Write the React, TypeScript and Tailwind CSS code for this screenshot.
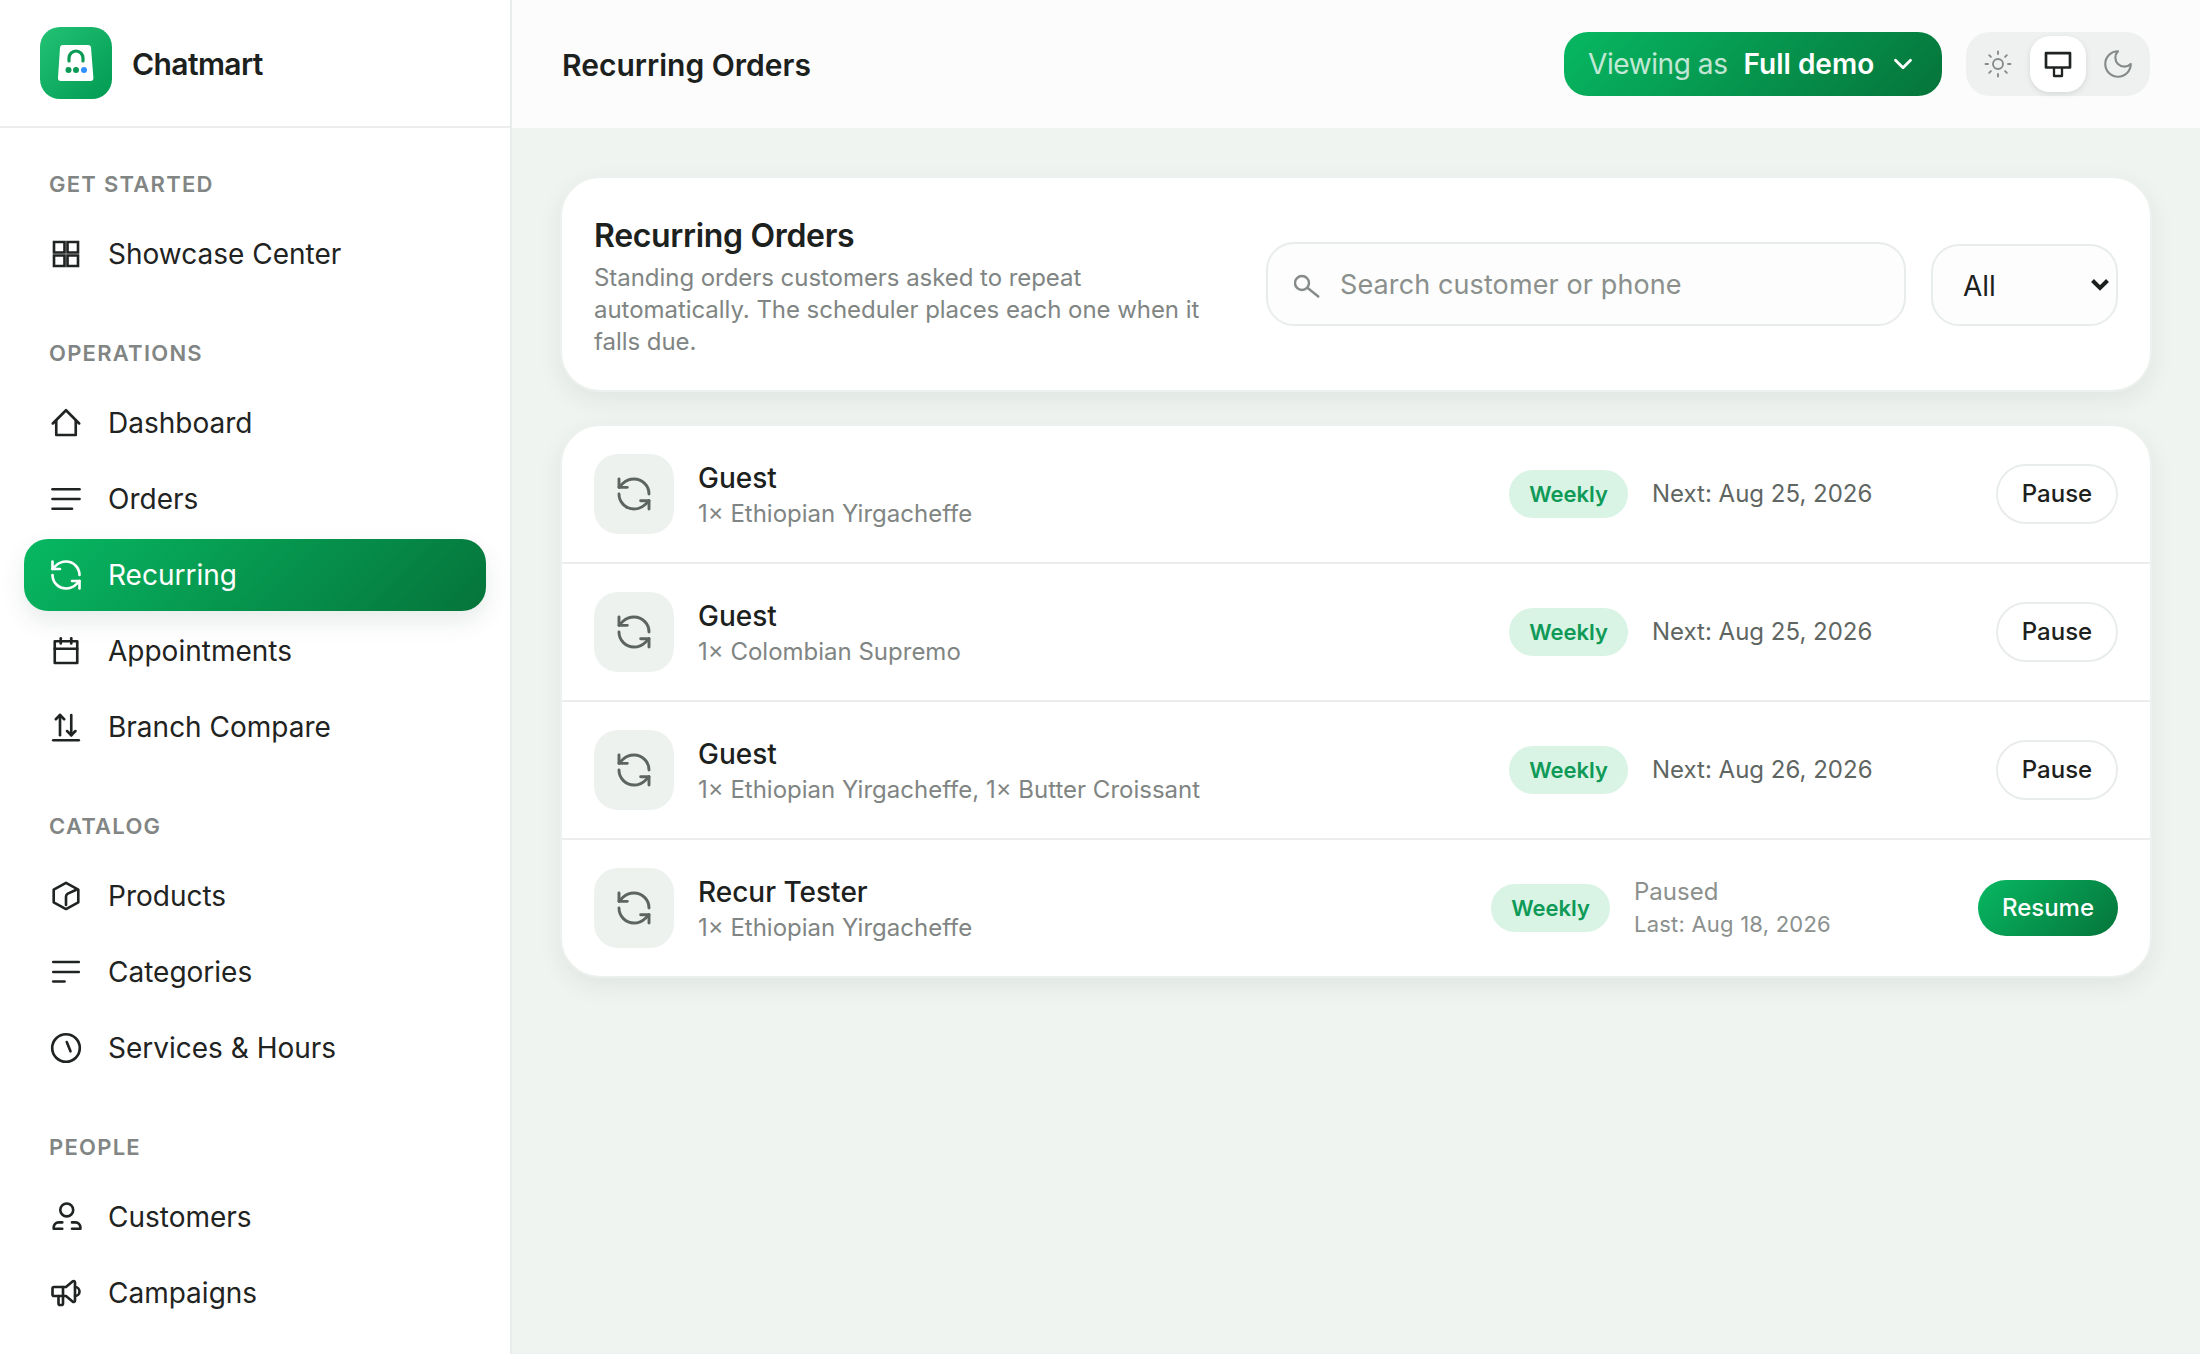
import { ChevronDown, RefreshCcw } from "lucide-react";

function Icon({ d, children }: { d?: string[]; children?: React.ReactNode }) {
  return (
    <svg width="36" height="36" viewBox="0 0 24 24" fill="none" stroke="currentColor" strokeWidth="1.75" strokeLinecap="round" strokeLinejoin="round" className="shrink-0">
      {d?.map((p) => <path key={p} d={p} />)}
      {children}
    </svg>
  );
}

const GridIcon = () => (
  <Icon>
    <path d="M4 4h7v7H4z" strokeLinecap="butt" strokeLinejoin="miter" />
    <path d="M13 4h7v7h-7z" strokeLinecap="butt" strokeLinejoin="miter" />
    <path d="M4 13h7v7H4z" strokeLinecap="butt" strokeLinejoin="miter" />
    <path d="M13 13h7v7h-7z" strokeLinecap="butt" strokeLinejoin="miter" />
  </Icon>
);
const HomeIcon = () => <Icon d={["M3.2 12.3 12 3.5l8.8 8.8", "M5.5 10.5V20h13v-9.5"]} />;
const OrdersIcon = () => <Icon d={["M3 5.5h18", "M3 12h18", "M3 18.5h13"]} />;
const RecurIcon = () => <RefreshCcw size={36} strokeWidth={1.75} className="shrink-0" />;
const CalendarIcon = () => <Icon d={["M4.5 5.5h15V20h-15z", "M4.5 10.5h15", "M8.5 3.5v3.5", "M15.5 3.5v3.5"]} />;
const CompareIcon = () => <Icon d={["M8 17.5V4", "M5.2 6.8 8 4l2.8 2.8", "M15.5 4v13.5", "M12.7 14.7l2.8 2.8 2.8-2.8", "M3.5 20.8h17"]} />;
const BoxIcon = () => <Icon d={["M12 3.2l8.2 4.5v8.5L12 20.7l-8.2-4.5V7.7z", "M12 18v-5.5a2.5 2.5 0 0 1 1.2-2.1L18.5 8"]} />;
const CategoriesIcon = () => <Icon d={["M3.5 5.3h17", "M3.5 12h17", "M3.5 18.3h7.5"]} />;
const ClockIcon = () => (
  <Icon d={["M12.5 8l2.5 6.2"]}>
    <circle cx="12" cy="12" r="9.2" />
  </Icon>
);
const CustomersIcon = () => (
  <Icon d={["M9.5 15.6H7a3.2 3.2 0 0 0-3.2 3.2v1h5.7", "M16 15.6h2.4a3.2 3.2 0 0 1 3.2 3.2v1H16"]}>
    <circle cx="12.5" cy="7.3" r="4.3" />
  </Icon>
);
const CampaignIcon = () => (
  <Icon
    d={[
      "M18 8a3 3 0 0 1 0 6",
      "M10 8v11a1 1 0 0 1-1 1H8a1 1 0 0 1-1-1v-5",
      "M12 8l4.524-3.77A.9.9 0 0 1 18 4.922v12.156a.9.9 0 0 1-1.476.692L12 14H4a1 1 0 0 1-1-1V9a1 1 0 0 1 1-1h8",
    ]}
  />
);
const HeartIcon = () => (
  <Icon d={["M19 14c1.49-1.46 3-3.21 3-5.5A5.5 5.5 0 0 0 16.5 3c-1.76 0-3 .5-4.5 2-1.5-1.5-2.74-2-4.5-2A5.5 5.5 0 0 0 2 8.5c0 2.3 1.5 4.05 3 5.5l7 7Z"]} />
);

const sections = [
  { label: "GET STARTED", items: [{ name: "Showcase Center", icon: <GridIcon /> }] },
  {
    label: "OPERATIONS",
    items: [
      { name: "Dashboard", icon: <HomeIcon /> },
      { name: "Orders", icon: <OrdersIcon /> },
      { name: "Recurring", icon: <RecurIcon />, active: true },
      { name: "Appointments", icon: <CalendarIcon /> },
      { name: "Branch Compare", icon: <CompareIcon /> },
    ],
  },
  {
    label: "CATALOG",
    items: [
      { name: "Products", icon: <BoxIcon /> },
      { name: "Categories", icon: <CategoriesIcon /> },
      { name: "Services & Hours", icon: <ClockIcon /> },
    ],
  },
  {
    label: "PEOPLE",
    items: [
      { name: "Customers", icon: <CustomersIcon /> },
      { name: "Campaigns", icon: <CampaignIcon /> },
      { name: "", icon: <HeartIcon /> },
    ],
  },
];

const rows = [
  { name: "Guest", items: "1× Ethiopian Yirgacheffe", next: "Next: Aug 25, 2026" },
  { name: "Guest", items: "1× Colombian Supremo", next: "Next: Aug 25, 2026" },
  { name: "Guest", items: "1× Ethiopian Yirgacheffe, 1× Butter Croissant", next: "Next: Aug 26, 2026" },
  { name: "Recur Tester", items: "1× Ethiopian Yirgacheffe", paused: "Last: Aug 18, 2026" },
];

function Sidebar() {
  return (
    <aside className="w-[512px] shrink-0 h-full overflow-hidden bg-white border-r-2 border-[#e9edea] flex flex-col">
      <div className="h-[128px] shrink-0 flex items-center gap-5 pl-10 border-b-2 border-[#ebeeec]">
        <svg width="72" height="72" viewBox="0 0 72 72" className="shrink-0">
          <defs>
            <linearGradient id="logo" x1="0" y1="0" x2="1" y2="1">
              <stop offset="0" stopColor="#22c274" />
              <stop offset="1" stopColor="#019a52" />
            </linearGradient>
          </defs>
          <rect width="72" height="72" rx="20" fill="url(#logo)" />
          <path d="M23 18h25a3 3 0 0 1 3 2.8l2.4 30a3 3 0 0 1-3 3.2H21a3 3 0 0 1-3-3.2l2-30a3 3 0 0 1 3-2.8z" fill="#fff" />
          <path d="M29 34v-3a7 7 0 0 1 14 0v3" fill="none" stroke="#0b9a55" strokeWidth="3.2" strokeLinecap="round" />
          <circle cx="28.5" cy="43" r="3" fill="#0b9a55" />
          <circle cx="36" cy="43" r="3" fill="#0b9a55" />
          <circle cx="44" cy="43" r="3" fill="#2f8fff" />
        </svg>
        <span className="text-[30px] leading-[40px] pt-[2px] font-semibold text-[#1c211e] tracking-[-0.02em]">Chatmart</span>
      </div>
      <nav className="flex flex-col gap-[47px] px-6 pt-10">
        {sections.map((s) => (
          <div key={s.label}>
            <div className="h-8 mb-[18px] pl-[25px] flex items-center text-[22px] font-semibold tracking-[0.057em] text-[#818583]">{s.label}</div>
            <div className="flex flex-col gap-1">
              {s.items.map((item) => (
                <div
                  key={item.name}
                  className={
                    item.active
                      ? "h-[72px] rounded-[24px] pl-6 flex items-center gap-6 text-[28px] text-white bg-[linear-gradient(135deg,#07b862,#05743a)] shadow-[0_10px_24px_rgba(10,60,35,0.1)]"
                      : "h-[72px] rounded-[24px] pl-6 flex items-center gap-6 text-[28px] text-[#1f2321]"
                  }
                >
                  {item.icon}
                  {item.name && <span>{item.name}</span>}
                </div>
              ))}
            </div>
          </div>
        ))}
      </nav>
    </aside>
  );
}

function Topbar() {
  return (
    <header className="h-[128px] shrink-0 bg-[#fbfcfb] flex items-center justify-between pl-[50px] pr-[50px]">
      <h1 className="text-[30px] leading-[40px] pt-[2px] font-semibold text-[#1c211e]">Recurring Orders</h1>
      <div className="flex items-center gap-6">
        <div className="h-16 w-[378px] rounded-[24px] pl-6 flex items-center text-[28px] text-white bg-[linear-gradient(135deg,#07b862,#05743a)]">
          <span className="opacity-75 tracking-[-0.015em]">Viewing as</span>
          <span className="font-semibold ml-[16px]">Full demo</span>
          <ChevronDown size={30} strokeWidth={2.25} className="ml-[14px]" />
        </div>
        <div className="h-16 rounded-[24px] bg-[#eef1ef] p-1 flex gap-1">
          <div className="w-14 h-14 flex items-center justify-center text-[#868b88]">
            <svg width="30" height="30" viewBox="0 0 24 24" fill="none" stroke="currentColor" strokeWidth="1.5" strokeLinecap="round">
              <circle cx="12" cy="12" r="4" />
              <path d="M12 2v2M12 20v2M4.93 4.93l1.41 1.41M17.66 17.66l1.41 1.41M2 12h2M20 12h2M6.34 17.66l-1.41 1.41M19.07 4.93l-1.41 1.41" />
            </svg>
          </div>
          <div className="w-14 h-14 flex items-center justify-center rounded-[20px] bg-white text-[#1f2321] shadow-[0_2px_6px_rgba(0,0,0,0.1)]">
            <svg width="32" height="32" viewBox="0 0 24 24" fill="none" stroke="currentColor" strokeWidth="2" strokeLinejoin="round">
              <path d="M3 3.8h18v10.8H3z" />
              <path d="M9 15v6h6v-6" strokeWidth="1.75" />
            </svg>
          </div>
          <div className="w-14 h-14 flex items-center justify-center text-[#868b88]">
            <svg width="34" height="34" viewBox="0 0 24 24" fill="none" stroke="currentColor" strokeWidth="1.5" strokeLinejoin="round">
              <path d="M12 3a6 6 0 0 0 9 9 9 9 0 1 1-9-9Z" />
            </svg>
          </div>
        </div>
      </div>
    </header>
  );
}

function FilterCard() {
  return (
    <section className="rounded-[40px] bg-white border-2 border-[#edf1ee] shadow-[0_8px_24px_rgba(16,40,28,0.07)] p-8 flex items-center">
      <div className="flex-1 pr-8">
        <h2 className="text-[32px] leading-[48px] pt-[2px] -mb-[2px] font-semibold text-[#1c211e] tracking-[-0.01em]">Recurring Orders</h2>
        <p className="mt-1 text-[24px] leading-8 text-[#808583] tracking-[-0.002em]">
          Standing orders customers asked to repeat automatically. The scheduler places each one when it falls due.
        </p>
      </div>
      <div className="relative w-[640px] shrink-0">
        <svg width="32" height="32" viewBox="0 0 32 32" fill="none" stroke="#868b88" strokeWidth="2.4" strokeLinecap="round" className="absolute left-[28px] top-[26px]">
          <circle cx="8" cy="15" r="7" />
          <path d="M14 20.3 24.3 28.5" />
        </svg>
        <input
          placeholder="Search customer or phone"
          className="w-full h-[84px] rounded-[28px] border-2 border-[#e9edea] bg-[#fcfdfc] pl-[72px] pr-6 text-[27px] tracking-[0.004em] outline-none placeholder:text-[#8b908d]"
        />
      </div>
      <div className="relative ml-[25px] mt-[2px]">
        <select defaultValue="All" className="appearance-none w-[187px] h-[82px] rounded-[28px] border-2 border-[#e9edea] bg-[#fcfdfc] pt-[2px] pl-[30px] text-[28px] text-[#1c211e] outline-none">
          <option>All</option>
          <option>Active</option>
          <option>Paused</option>
        </select>
        <svg width="24" height="24" viewBox="0 0 24 24" fill="none" stroke="#1c211e" strokeWidth="4" className="absolute right-[6px] top-[28px] pointer-events-none">
          <path d="M4.5 8.5 12 16l7.5-7.5" />
        </svg>
      </div>
    </section>
  );
}

function RowsCard() {
  return (
    <section className="mt-8 rounded-[40px] bg-white border-2 border-[#edf1ee] shadow-[0_8px_24px_rgba(16,40,28,0.07)] overflow-hidden">
      {rows.map((r, i) => (
        <div key={i} className={i < rows.length - 1 ? "flex items-center gap-6 px-8 py-7 border-b-2 border-[#eceeed]" : "flex items-center gap-6 px-8 py-7"}>
          <div className="w-20 h-20 rounded-[24px] bg-[#eef2ef] flex items-center justify-center text-[#5d6560] shrink-0">
            <RefreshCcw size={40} strokeWidth={1.75} />
          </div>
          <div className="flex-1 min-w-0">
            <div className="text-[28px] leading-10 font-medium text-[#1c211e]">{r.name}</div>
            <div className="text-[24px] leading-8 text-[#808583]">{r.items}</div>
          </div>
          <span className="h-12 px-5 rounded-full bg-[#d9f3e5] text-[#0f9a57] text-[22px] font-semibold flex items-center">Weekly</span>
          <div className="w-[320px] shrink-0">
            {r.next ? (
              <div className="text-[24px] text-[#5f6662]">{r.next}</div>
            ) : (
              <div className="text-[#8b908d]">
                <div className="text-[24px] leading-8">Paused</div>
                <div className="text-[22px] leading-8 tracking-[0.01em]">{r.paused}</div>
              </div>
            )}
          </div>
          {r.next ? (
            <button className="h-[60px] w-[122px] rounded-full border-2 border-[#e9edea] bg-white text-[24px] font-medium text-[#1c211e]">Pause</button>
          ) : (
            <button className="h-14 w-[140px] rounded-full text-[24px] font-medium text-white bg-[linear-gradient(135deg,#07b862,#05743a)]">Resume</button>
          )}
        </div>
      ))}
    </section>
  );
}

export default function App() {
  return (
    <div className="flex h-screen overflow-hidden font-[Inter,sans-serif] bg-[#f0f4f1]">
      <Sidebar />
      <div className="flex-1 min-w-0 flex flex-col">
        <Topbar />
        <main className="flex-1 px-12 pt-12">
          <FilterCard />
          <RowsCard />
        </main>
      </div>
    </div>
  );
}
